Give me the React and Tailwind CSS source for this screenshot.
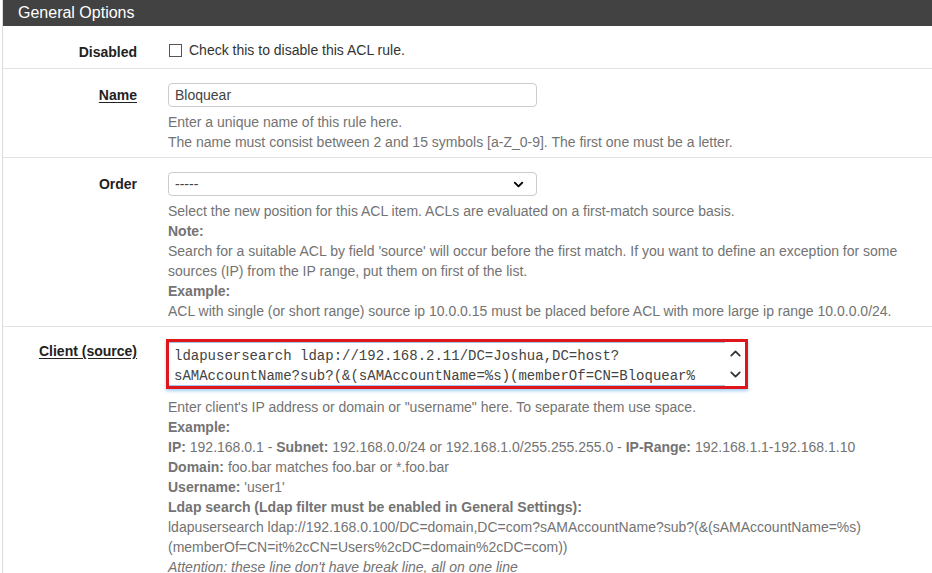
import { ChevronDown, ChevronUp } from 'lucide-react';

function Row({ label, underline, children, className = '' }) {
  return (
    <div className={`flex border-b border-[#e3e3e3] ${className}`}>
      <div className="w-[134px] shrink-0 text-right">
        <span className={`font-bold text-[#222] leading-[24px] ${underline ? 'underline underline-offset-2' : ''}`}>
          {label}
        </span>
      </div>
      <div className="ml-[31px] flex-1">{children}</div>
    </div>
  );
}

function Help({ children }) {
  return <div className="text-[#737373] leading-[20px]">{children}</div>;
}

const ldapValue =
  'ldapusersearch ldap://192.168.2.11/DC=Joshua,DC=host?\nsAMAccountName?sub?(&(sAMAccountName=%s)(memberOf=CN=Bloquear%\n2cCN=Users%2cDC=Joshua%2cDC=host))';

export default function App() {
  return (
    <div className="w-[932px] h-[573px] overflow-hidden bg-white font-['Liberation_Sans',Arial,sans-serif] text-[14px]">
      <div className="ml-[2px] border-l border-[#dcdcdc] h-full">
        <div className="h-[26px] bg-[#424242] text-white text-[16px] pl-[15px] leading-[26px]">General Options</div>

        <Row label="Disabled" className="pt-[14px] h-[43px]">
          <label className="flex items-center h-[20px] text-[#333]">
            <span className="w-[13px] h-[13px] border border-[#555] bg-white ml-[1px] mr-[7px]" />
            Check this to disable this ACL rule.
          </label>
        </Row>

        <Row label="Name" underline className="pt-[14px] pb-[5px]">
          <input
            readOnly
            value="Bloquear"
            className="w-[369px] h-[24px] border border-[#ccc] rounded-[4px] px-[6px] text-[#444] outline-none"
          />
          <div className="mt-[5px]">
            <Help>Enter a unique name of this rule here.</Help>
            <Help>The name must consist between 2 and 15 symbols [a-Z_0-9]. The first one must be a letter.</Help>
          </div>
        </Row>

        <Row label="Order" className="pt-[14px] pb-[5px]">
          <div className="w-[369px] h-[24px] border border-[#ccc] rounded-[4px] px-[6px] flex items-center justify-between text-[#444]">
            <span>-----</span>
            <ChevronDown className="w-[15px] h-[15px] mr-[4px] text-black" strokeWidth={3} />
          </div>
          <div className="mt-[5px]">
            <Help>Select the new position for this ACL item. ACLs are evaluated on a first-match source basis.</Help>
            <Help><b>Note:</b></Help>
            <Help>
              Search for a suitable ACL by field 'source' will occur before the first match. If you want to define an exception for some sources (IP) from the IP range, put them on first of the list.
            </Help>
            <Help><b>Example:</b></Help>
            <Help>ACL with single (or short range) source ip 10.0.0.15 must be placed before ACL with more large ip range 10.0.0.0/24.</Help>
          </div>
        </Row>

        <Row label="Client (source)" underline className="pt-[12px]">
          <div className="-ml-[2px] w-[582px] h-[50px] border-[3px] border-[#e0161d] flex bg-white shadow-[0_2px_3px_rgba(102,175,233,0.6)]">
            <textarea
              readOnly
              wrap="off"
              value={ldapValue}
              className="flex-1 h-full resize-none overflow-hidden border-b border-t border-[#9fc4e8] pl-[5px] pt-[3px] font-['Liberation_Mono','Courier_New',monospace] text-[14px] leading-[20px] text-[#444] outline-none"
            />
            <div className="w-[20px] flex flex-col items-center justify-between py-[3px] bg-white text-[#333]">
              <ChevronUp className="w-[17px] h-[17px]" strokeWidth={2.5} />
              <ChevronDown className="w-[17px] h-[17px]" strokeWidth={2.5} />
            </div>
          </div>
          <div className="mt-[8px]">
            <Help>Enter client's IP address or domain or "username" here. To separate them use space.</Help>
            <Help><b>Example:</b></Help>
            <Help>
              <b>IP:</b> 192.168.0.1 - <b>Subnet:</b> 192.168.0.0/24 or 192.168.1.0/255.255.255.0 - <b>IP-Range:</b> 192.168.1.1-192.168.1.10
            </Help>
            <Help><b>Domain:</b> foo.bar matches foo.bar or *.foo.bar</Help>
            <Help><b>Username:</b> 'user1'</Help>
            <Help><b>Ldap search (Ldap filter must be enabled in General Settings):</b></Help>
            <Help>ldapusersearch ldap://192.168.0.100/DC=domain,DC=com?sAMAccountName?sub?(&amp;(sAMAccountName=%s)</Help>
            <Help>(memberOf=CN=it%2cCN=Users%2cDC=domain%2cDC=com))</Help>
            <Help><i>Attention: these line don't have break line, all on one line</i></Help>
          </div>
        </Row>
      </div>
    </div>
  );
}
